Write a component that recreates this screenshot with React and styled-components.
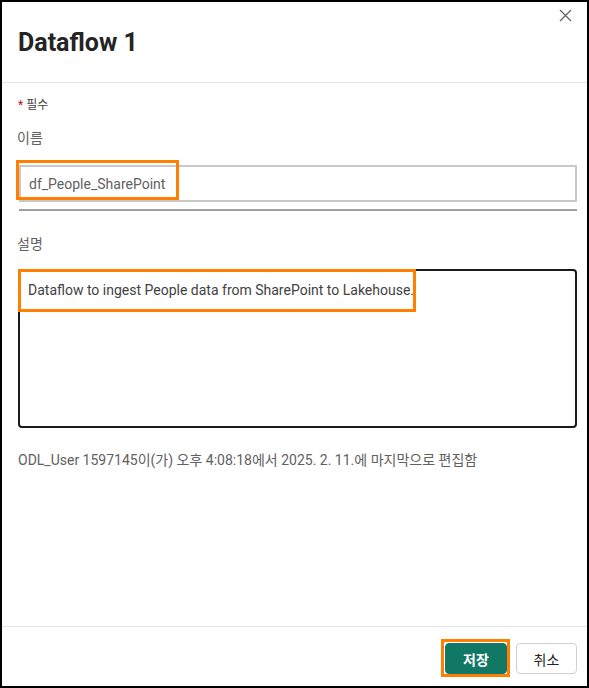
import React from "react";
import styled, { createGlobalStyle } from "styled-components";

const Global = createGlobalStyle`
  html, body { margin: 0; padding: 0; background: #fff; }
  * { box-sizing: border-box; }
  body { font-family: Roboto, "Noto Sans CJK KR", sans-serif; }
`;

const Dialog = styled.div`
  position: relative;
  width: 589px;
  height: 688px;
  border: 2px solid #000;
  display: flex;
  flex-direction: column;
  background: #fff;
`;

const Header = styled.header`
  height: 81px;
  border-bottom: 1px solid #e6e6e6;
  display: flex;
  flex-direction: column;
  padding: 0 10px 0 16px;
`;

const CloseRow = styled.div`
  display: flex;
  justify-content: flex-end;
  height: 25px;
  padding-top: 5px;
`;

const CloseButton = styled.button`
  width: 16px;
  height: 16px;
  padding: 0;
  margin-right: 4px;
  border: none;
  background: none;
  display: flex;
  align-items: center;
  justify-content: center;
  color: #616161;
`;

const Title = styled.h1`
  margin: 0;
  font-size: 25px;
  line-height: 32px;
  font-weight: 700;
  color: #242424;
`;

const Body = styled.main`
  flex: 1;
  padding: 14px 10px 0 15px;
  display: flex;
  flex-direction: column;
`;

const Required = styled.div`
  font-size: 12px;
  line-height: 16px;
  color: #424242;
  padding-left: 1px;
  span { color: #c50f1f; margin-right: 3px; }
`;

const Label = styled.div`
  font-size: 14px;
  line-height: 20px;
  color: #616161;
  margin-top: ${(p) => p.$mt}px;
`;

const Field = styled.div`
  position: relative;
  margin-top: ${(p) => p.$mt}px;
`;

const InputBox = styled.div`
  height: 37px;
  border: 2px solid #c8c8c8;
  margin-left: 2px;
  padding: 0 8px;
  display: flex;
  align-items: center;
  font-size: 14px;
  color: #616161;
`;

const Underline = styled.div`
  height: 2px;
  margin: 7px 0 0 2px;
  background: #a0a0a0;
`;

const TextArea = styled.div`
  height: 159px;
  border: 2px solid #1a1a1a;
  border-radius: 4px;
  margin-left: 1px;
  padding: 9px 8px;
  font-size: 14px;
  line-height: 20px;
  color: #424242;
`;

const Meta = styled.div`
  font-size: 14px;
  line-height: 20px;
  color: #616161;
  margin-top: 22px;
  padding-left: 1px;
`;

const Footer = styled.footer`
  height: 60px;
  border-top: 1px solid #e6e6e6;
  display: flex;
  justify-content: flex-end;
  align-items: flex-start;
  gap: 9px;
  padding: 16px 10px 0 0;
`;

const ButtonWrap = styled.div`
  position: relative;
`;

const Button = styled.button`
  height: 31px;
  min-width: ${(p) => p.$w}px;
  padding: 0 12px;
  border-radius: 4px;
  font-family: inherit;
  font-size: 14px;
  font-weight: ${(p) => (p.$primary ? 700 : 400)};
  background: ${(p) => (p.$primary ? "#117865" : "#fff")};
  color: ${(p) => (p.$primary ? "#fff" : "#242424")};
  border: 1px solid ${(p) => (p.$primary ? "#117865" : "#d1d1d1")};
`;

const Highlight = styled.div`
  position: absolute;
  top: ${(p) => p.$top}px;
  left: ${(p) => p.$left}px;
  width: ${(p) => p.$w}px;
  height: ${(p) => p.$h}px;
  border: 3px solid #ff8000;
  pointer-events: none;
`;

export default function App() {
  return (
    <>
      <Global />
      <Dialog>
        <Header>
          <CloseRow>
            <CloseButton aria-label="닫기">
              <svg width="13" height="13" viewBox="0 0 13 13">
                <path d="M1 1 L12 12 M12 1 L1 12" stroke="#616161" strokeWidth="1.2" fill="none" />
              </svg>
            </CloseButton>
          </CloseRow>
          <Title>Dataflow 1</Title>
        </Header>
        <Body>
          <Required>
            <span>*</span>필수
          </Required>
          <Label $mt={15}>이름</Label>
          <Field $mt={17}>
            <InputBox>df_People_SharePoint</InputBox>
            <Underline />
            <Highlight $top={-5} $left={-1} $w={163} $h={40} />
          </Field>
          <Label $mt={23}>설명</Label>
          <Field $mt={15}>
            <TextArea>Dataflow to ingest People data from SharePoint to Lakehouse.</TextArea>
            <Highlight $top={0} $left={1} $w={398} $h={43} />
          </Field>
          <Meta>ODL_User 1597145이(가) 오후 4:08:18에서 2025. 2. 11.에 마지막으로 편집함</Meta>
        </Body>
        <Footer>
          <ButtonWrap>
            <Button $primary $w={62}>저장</Button>
            <Highlight $top={-4} $left={-4} $w={69} $h={38} />
          </ButtonWrap>
          <Button $w={61}>취소</Button>
        </Footer>
      </Dialog>
    </>
  );
}
